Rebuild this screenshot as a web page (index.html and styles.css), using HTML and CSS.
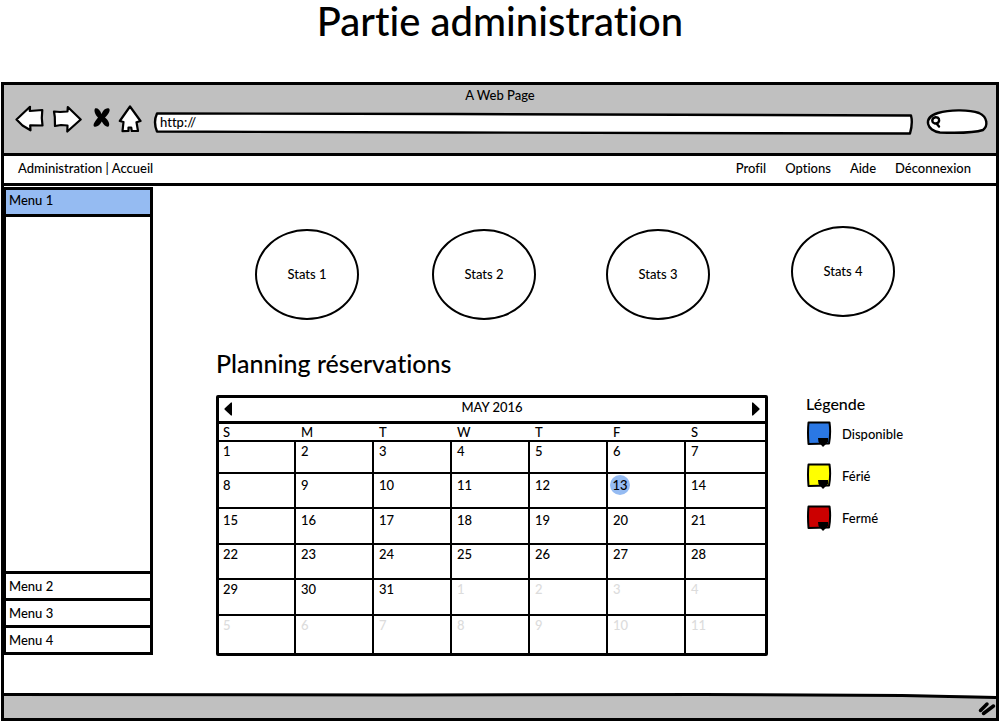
FILE: index.html
```html
<!DOCTYPE html>
<html lang="fr">
<head>
<meta charset="utf-8">
<meta name="viewport" content="width=device-width, initial-scale=1">
<title>Partie administration</title>
<link rel="stylesheet" href="styles.css">
</head>
<body>
<div class="page">
  <h1 class="page-title">Partie administration</h1>
  <div class="window">
    <header class="chrome">
      <div class="chrome-title">A Web Page</div>
      <div class="toolbar">
        <div class="tools">
          <button class="tool" type="button" aria-label="Back"><svg width="30" height="28" viewBox="0 0 30 28"><path d="M1.500 14.500 15 1.800 14.800 6 27.300 5 26.800 13 27.500 20.500 15.200 20.300 15.500 25.300 7.500 20.500Z"/></svg></button>
          <button class="tool" type="button" aria-label="Forward"><svg width="30" height="28" viewBox="0 0 30 28"><path d="M2 6.500 8 7 15.500 6.500 15.800 2 28.700 14.500 15.300 26.500 15.500 20.500 9 20 3 21 2.800 12Z"/></svg></button>
          <button class="tool" type="button" aria-label="Stop"><svg width="22" height="28" viewBox="0 0 22 28"><path class="stop" d="M6 3.500C8 2.500 11 4.500 12.500 9C14 5 17 2.500 20 3.500C22 5.500 19 10 16 12.500C19 15 21.500 19 19.500 21.500C17.500 22.500 14.500 20 12.800 16.500C11 20 8 22.500 5 21.500C3.500 19.500 6.500 15.500 9 12.500C6.500 10 4.500 6 6 3.500Z"/></svg></button>
          <button class="tool" type="button" aria-label="Home"><svg width="24" height="28" viewBox="0 0 24 28"><path d="M12 1.500 22.500 16 18.500 17.200 20 26 13.800 26 13.200 22.500 10.500 22.500 10.500 26 4.500 26.200 5.500 17 1.800 16Z"/></svg></button>
        </div>
        <div class="field field-url">
          <svg class="outline" viewBox="0 0 760 23" preserveAspectRatio="none"><path d="M3 1.500 300 2 757 3.500Q759 11 756 21.500L300 20.500 3 19.500Q-1 10 3 1.500Z"/></svg>
          <input class="entry" type="text" value="http://" aria-label="Address">
        </div>
        <div class="field field-search">
          <svg class="outline" viewBox="0 0 63 26" preserveAspectRatio="none"><path d="M12 4C25 0 44 1 53 4C62 8 62 17 57 21C48 24 28 24 14 23.500C1 22 -4 9 12 4Z"/></svg>
          <svg class="lens" width="14" height="14" viewBox="0 0 14 14"><path d="M6.500 2.200C10 2 11 5 9.300 7.500C7 9.500 3.500 8.500 3.300 5.800C3.300 3.600 4.500 2.400 6.500 2.200ZM7.500 8.500 10 11.500"/></svg>
          <input class="entry" type="search" aria-label="Search">
        </div>
      </div>
    </header>

    <nav class="navbar">
      <span>Administration | Accueil</span>
      <div class="nav-links">
        <a href="#">Profil</a><a href="#">Options</a><a href="#">Aide</a><a href="#">Déconnexion</a>
      </div>
    </nav>

    <div class="content">
      <aside class="accordion">
        <button class="menu menu-active" type="button">Menu 1</button>
        <div class="menu-panel"></div>
        <button class="menu" type="button">Menu 2</button>
        <button class="menu" type="button">Menu 3</button>
        <button class="menu" type="button">Menu 4</button>
      </aside>

      <main class="main">
        <section class="stats">
          <div class="stat">Stats 1</div>
          <div class="stat">Stats 2</div>
          <div class="stat">Stats 3</div>
          <div class="stat stat-raised">Stats 4</div>
        </section>
        <h2 class="heading">Planning réservations</h2>
        <div class="planning">
          <section class="calendar">
            <div class="month">
              <button class="arrow" type="button" aria-label="Previous month"><svg width="9" height="14" viewBox="0 0 9 14"><path d="M8 0.500V13.500H7L0.500 7.500V6.500L7 0.500Z"/></svg></button>
              <span>MAY 2016</span>
              <button class="arrow" type="button" aria-label="Next month"><svg width="9" height="14" viewBox="0 0 9 14"><path d="M1 0.500V13.500H2L8.500 7.500V6.500L2 0.500Z"/></svg></button>
            </div>
            <table class="days">
              <thead><tr><th>S</th><th>M</th><th>T</th><th>W</th><th>T</th><th>F</th><th>S</th></tr></thead>
              <tbody>
                <tr><td>1</td><td>2</td><td>3</td><td>4</td><td>5</td><td>6</td><td>7</td></tr>
                <tr><td>8</td><td>9</td><td>10</td><td>11</td><td>12</td><td><span class="today">13</span></td><td>14</td></tr>
                <tr><td>15</td><td>16</td><td>17</td><td>18</td><td>19</td><td>20</td><td>21</td></tr>
                <tr><td>22</td><td>23</td><td>24</td><td>25</td><td>26</td><td>27</td><td>28</td></tr>
                <tr><td>29</td><td>30</td><td>31</td><td class="off">1</td><td class="off">2</td><td class="off">3</td><td class="off">4</td></tr>
                <tr><td class="off">5</td><td class="off">6</td><td class="off">7</td><td class="off">8</td><td class="off">9</td><td class="off">10</td><td class="off">11</td></tr>
              </tbody>
            </table>
          </section>
          <section class="legend">
            <h3 class="legend-title">Légende</h3>
            <div class="legend-item">
              <button class="swatch blue" type="button" aria-labelledby="l1"><svg width="26" height="28" viewBox="0 0 26 28"><path class="box" d="M2.500 2.500 23.500 2.500Q25 13 23 23.500L2.500 24Q1.500 12 2.500 2.500Z"/><path class="tip" d="M12 18H22V22L17 27 12.500 22Z"/></svg></button>
              <span id="l1">Disponible</span>
            </div>
            <div class="legend-item">
              <button class="swatch yellow" type="button" aria-labelledby="l2"><svg width="26" height="28" viewBox="0 0 26 28"><path class="box" d="M2.500 2.500 23.500 2.500Q25 13 23 23.500L2.500 24Q1.500 12 2.500 2.500Z"/><path class="tip" d="M12 18H22V22L17 27 12.500 22Z"/></svg></button>
              <span id="l2">Férié</span>
            </div>
            <div class="legend-item">
              <button class="swatch red" type="button" aria-labelledby="l3"><svg width="26" height="28" viewBox="0 0 26 28"><path class="box" d="M2.500 2.500 23.500 2.500Q25 13 23 23.500L2.500 24Q1.500 12 2.500 2.500Z"/><path class="tip" d="M12 18H22V22L17 27 12.500 22Z"/></svg></button>
              <span id="l3">Fermé</span>
            </div>
          </section>
        </div>
      </main>
    </div>

    <footer class="statusbar">
      <svg class="slope" viewBox="0 0 994 6" preserveAspectRatio="none"><path class="above" d="M0 0H994V3L900 1.500 400 1 0 1Z"/><path class="edge" d="M0 1.500 400 2 700 1.500 900 2.500 994 4.500"/></svg>
      <svg class="grip" width="18" height="16" viewBox="0 0 18 16"><path d="M2.500 9.500 9 3M5.500 12.500 15.500 5"/></svg>
    </footer>
  </div>
</div>
</body>
</html>
```

FILE: styles.css
```css
* { box-sizing: border-box; }

body {
  margin: 0;
  background: #fff;
  color: #000;
  font: 13px/18px Lato, "Noto Sans", sans-serif;
  font-weight: 500;
  font-variant-ligatures: none;
}

button, input { font: inherit; color: inherit; font-variant-ligatures: none; }
button { margin: 0; padding: 0; border: 0; background: none; cursor: pointer; }
svg { display: block; }
a { color: inherit; text-decoration: none; }

.page { display: flex; flex-direction: column; min-height: 100vh; padding: 0 1px 1px; }

.page-title {
  margin: 0;
  padding-bottom: 40px;
  font-size: 40px;
  line-height: 42px;
  font-weight: 500;
  text-align: center;
}

.window { flex: 1; display: flex; flex-direction: column; border: 3px solid #000; }

.chrome { background: #c0c0c0; padding-bottom: 18px; }
.chrome-title { text-align: center; line-height: 20px; }
.toolbar { display: flex; align-items: flex-end; gap: 12px; height: 30px; padding: 0 7px 0 11px; }
.tools { display: flex; align-self: flex-start; gap: 7px; }
.tool path { fill: #fff; stroke: #000; stroke-width: 2.2; stroke-linejoin: round; }
.tool .stop { fill: #000; stroke: none; }

.field { display: grid; align-items: center; }
.field > * { grid-area: 1 / 1; }
.field-url { flex: 1; height: 23px; }
.field-search { width: 63px; height: 26px; }
.outline { width: 100%; height: 100%; overflow: visible; }
.outline path { fill: #fff; stroke: #000; stroke-width: 2.4; stroke-linejoin: round; vector-effect: non-scaling-stroke; }
.lens { margin-left: 3px; }
.lens path { fill: none; stroke: #000; stroke-width: 2.4; stroke-linecap: round; }
.entry { width: 100%; min-width: 0; padding: 0 6px 3px; border: 0; background: none; outline: 0; appearance: none; }
.field-search .entry { padding-left: 20px; }

.navbar {
  display: flex;
  align-items: center;
  justify-content: space-between;
  height: 33px;
  padding: 0 25px 3px 14px;
  border-top: 3px solid #000;
  border-bottom: 3px solid #000;
}
.nav-links { display: flex; gap: 19px; }

.content { flex: 1; display: flex; }

.accordion {
  display: flex;
  flex-direction: column;
  width: 149px;
  margin: 1px 0 38px;
  border: 2px solid #000;
  border-width: 3px 3px 3px 2px;
}
.menu { height: 27px; padding-left: 3px; border-top: 3px solid #000; text-align: left; }
.menu-active { height: 24px; padding-bottom: 4px; border-top: 0; background: #95bbf2; }
.menu-panel { flex: 1; border-top: 3px solid #000; }

.main { flex: 1; padding: 40px 40px 0 63px; }

.stats {
  display: grid;
  grid-template-columns: 177fr 174fr 185fr 104px;
  align-items: end;
  height: 94px;
  margin: 0 61px 0 39px;
}
.stat {
  display: grid;
  place-items: center;
  width: 104px;
  height: 91px;
  padding-bottom: 2px;
  border: 2px solid #000;
  border-radius: 50%;
}
.stat-raised { align-self: start; }

.heading { margin: 28px 0 17px; font-size: 25px; line-height: 30px; font-weight: 500; }

.planning { display: flex; gap: 38px; }

.calendar { flex: 1; border: 3px solid #000; border-radius: 2px; }
.month {
  display: flex;
  justify-content: space-between;
  height: 26px;
  padding: 0 5px;
  border-bottom: 3px solid #000;
}
.arrow { height: 22px; }
.arrow path { fill: #000; }

.days { width: 100%; border-spacing: 0; table-layout: fixed; }
.days th { padding: 0 5px; line-height: 16px; font-weight: inherit; text-align: left; border-left: 2px solid transparent; }
.days th:first-child { width: 75px; }
.days th:last-child { width: 81px; }
.days th:first-child, .days td:first-child { padding-left: 4px; border-left: 0; }
.days td {
  height: 35px;
  padding: 0 0 0 5px;
  border-top: 2px solid #000;
  border-left: 2px solid #000;
  vertical-align: top;
}
.days tr:nth-child(odd) td { height: 36px; }
.days tr:nth-child(2) td, .days tr:nth-child(3) td { padding-top: 2px; }
.days tbody tr:first-child td { height: 32px; }
.days tbody tr:last-child td { height: 39px; }
.days .off { color: #dcdcdc; }
.today {
  display: inline-block;
  width: 20px;
  height: 20px;
  margin: -1px -3px;
  border-radius: 50%;
  background: #95bbf2;
  line-height: 20px;
  text-align: center;
}

.legend { width: 150px; }
.legend-title { margin: 0 0 8px; font-size: 16px; line-height: 17px; font-weight: inherit; }
.legend-item { display: flex; gap: 10px; height: 42px; line-height: 28px; }
.swatch { height: 28px; }
.box { stroke: #000; stroke-width: 2; stroke-linejoin: round; }
.blue .box { fill: #2b78e4; }
.yellow .box { fill: #ff0; }
.red .box { fill: #c00; }

.statusbar {
  display: grid;
  grid-template-rows: 6px 19px;
  justify-items: end;
  align-items: center;
  background: #c0c0c0;
}
.slope { width: 100%; height: 6px; }
.above { fill: #fff; }
.edge { fill: none; stroke: #000; stroke-width: 3; }
.grip path { fill: none; stroke: #000; stroke-width: 3.5; stroke-linecap: round; }
```
